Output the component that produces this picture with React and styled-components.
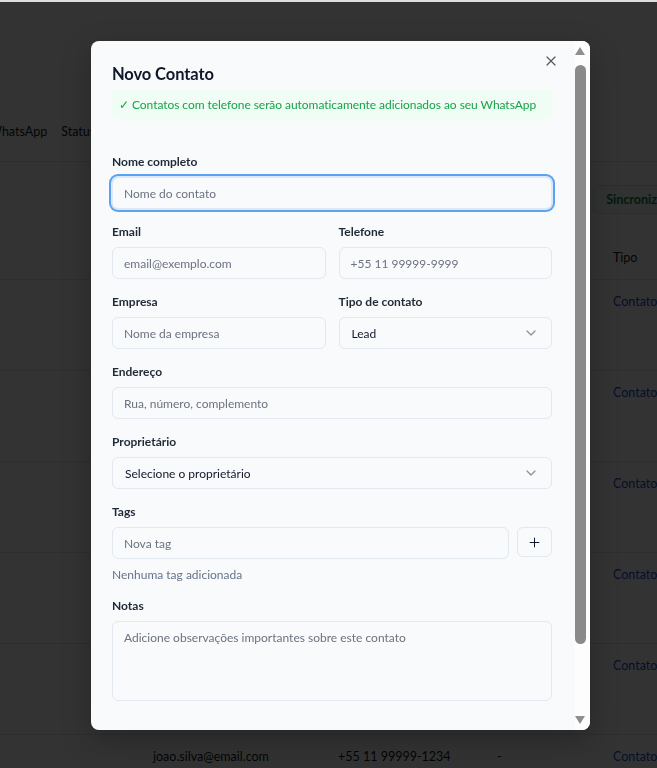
import React from 'react';
import styled, { createGlobalStyle } from 'styled-components';
import { X, ChevronDown, Plus } from 'lucide-react';

const GlobalStyle = createGlobalStyle`
  html, body {
    margin: 0;
    padding: 0;
  }
  body {
    font-family: Lato, "Liberation Sans", sans-serif;
    background: #dedede;
    overflow: hidden;
  }
  * {
    box-sizing: border-box;
  }
`;

/* ---------- page behind the dialog ---------- */

const Page = styled.div`
  height: 768px;
  margin-top: 2px;
  background: #ffffff;
  overflow: hidden;
  color: #111827;
  font-size: 12.5px;
`;

const Tabs = styled.div`
  display: flex;
  align-items: center;
  gap: 14px;
  height: 60px;
  margin-top: 100px;
  margin-left: -11px;
  border-bottom: 1px solid #e5e7eb;
`;

const Toolbar = styled.div`
  display: flex;
  justify-content: flex-end;
  padding: 23px 0 0;
  margin-right: -24px;
`;

const SyncButton = styled.div`
  height: 29px;
  padding: 0 12px;
  display: flex;
  align-items: center;
  border: 1px solid #bbf7d0;
  background: #f0fdf4;
  border-radius: 6px;
  color: #15803d;
  font-weight: 700;
`;

const TableHead = styled.div`
  display: grid;
  grid-template-columns: 153px 185px 159px 116px 1fr;
  align-items: center;
  height: 44px;
  margin-top: 22px;
  border-bottom: 1px solid #e5e7eb;
`;

const Row = styled.div`
  display: grid;
  grid-template-columns: 153px 185px 159px 116px 1fr;
  height: 91px;
  padding-top: 13px;
  line-height: 18px;
  border-bottom: 1px solid #e5e7eb;
`;

const TypeLink = styled.span`
  color: #1d4ed8;
`;

/* ---------- dialog ---------- */

const Overlay = styled.div`
  position: fixed;
  inset: 2px 0 0 0;
  background: rgba(0, 0, 0, 0.8);
`;

const Dialog = styled.div`
  position: fixed;
  left: 91px;
  top: 41px;
  width: 499px;
  height: 689px;
  display: flex;
  background: #f9fafb;
  border-radius: 8px;
  overflow: hidden;
  box-shadow: 0 10px 30px rgba(0, 0, 0, 0.25);
`;

const ScrollArea = styled.div`
  flex: 1;
  min-width: 0;
  overflow: hidden;
`;

const ScrollBar = styled.div`
  flex: none;
  width: 15px;
  display: flex;
  flex-direction: column;
  padding: 6px 0 6px;
  background: #fdfdfd;
`;

const Arrow = styled.div`
  width: 0;
  height: 0;
  border-left: 5.5px solid transparent;
  border-right: 5.5px solid transparent;
  ${(p) =>
    p.$down
      ? 'border-top: 8px solid #8f8f8f; margin-top: auto;'
      : 'border-bottom: 8px solid #8f8f8f;'}
`;

const Thumb = styled.div`
  width: 11px;
  height: 579px;
  margin-top: 10px;
  border-radius: 6px;
  background: #8a8a8a;
`;

const Body = styled.div`
  position: relative;
  padding: 20px 23px 24px 21px;
  font-size: 12px;
`;

const CloseButton = styled.button`
  position: absolute;
  top: 12px;
  right: 16px;
  width: 16px;
  height: 16px;
  padding: 0;
  border: none;
  background: none;
  color: #333;
  opacity: 0.8;
  display: flex;
  cursor: pointer;
`;

const Title = styled.h2`
  margin: 0;
  font-size: 16.5px;
  line-height: 26px;
  font-weight: 700;
  letter-spacing: -0.1px;
  color: #0f172a;
`;

const Notice = styled.div`
  margin-top: 3px;
  padding: 6px 7px;
  line-height: 17px;
  font-size: 12px;
  letter-spacing: -0.05px;
  color: #16a34a;
  background: #f0fdf4;
  border-radius: 4px;
`;

const Form = styled.div`
  display: flex;
  flex-direction: column;
  gap: 16px;
  margin-top: 36px;
`;

const Pair = styled.div`
  display: grid;
  grid-template-columns: 1fr 1fr;
  gap: 13px;
`;

const Field = styled.div`
  display: flex;
  flex-direction: column;
  gap: 8px;
`;

const Label = styled.label`
  font-size: 12px;
  line-height: 14px;
  font-weight: 700;
  color: #1f2937;
`;

const Input = styled.input`
  width: 100%;
  height: 32px;
  padding: 0 11px;
  border: 1px solid #e2e8f0;
  border-radius: 6px;
  background: transparent;
  font: inherit;
  font-size: 12px;
  color: #0f172a;
  outline: none;
  box-shadow: ${(p) => (p.$focused ? '0 0 0 1px #dbeafe, 0 0 0 3px #5aa2f2' : 'none')};

  &::placeholder {
    color: #6b7280;
  }
`;

const Select = styled.div`
  height: 32px;
  padding: 0 12px;
  display: flex;
  align-items: center;
  justify-content: space-between;
  border: 1px solid #e2e8f0;
  border-radius: 6px;
  font-size: 12px;
  color: #0f172a;

  svg {
    opacity: 0.45;
  }
`;

const TagRow = styled.div`
  display: flex;
  align-items: flex-start;
  gap: 8px;
`;

const IconButton = styled.button`
  flex: none;
  width: 35px;
  height: 30px;
  display: flex;
  align-items: center;
  justify-content: center;
  border: 1px solid #e2e8f0;
  border-radius: 6px;
  background: transparent;
  color: #0f172a;
  padding: 0;
`;

const Hint = styled.div`
  font-size: 12px;
  line-height: 16px;
  color: #64748b;
`;

const TextArea = styled.textarea`
  width: 100%;
  height: 80px;
  padding: 8px 11px;
  border: 1px solid #e2e8f0;
  border-radius: 6px;
  background: transparent;
  font: inherit;
  font-size: 12px;
  line-height: 16px;
  resize: none;
  outline: none;

  &::placeholder {
    color: #6b7280;
  }
`;

const Footer = styled.div`
  display: flex;
  justify-content: flex-end;
  gap: 8px;
  margin-top: 40px;
`;

const FooterButton = styled.button`
  height: 40px;
  padding: 0 16px;
  border-radius: 6px;
  font: inherit;
  font-size: 13px;
  font-weight: 700;
  border: 1px solid ${(p) => (p.$primary ? '#0f172a' : '#e2e8f0')};
  background: ${(p) => (p.$primary ? '#0f172a' : 'transparent')};
  color: ${(p) => (p.$primary ? '#fff' : '#0f172a')};
`;

const rows = [
  { email: 'maria.souza@email.com', phone: '+55 11 98888-1111', company: 'Tech Ltda' },
  { email: 'pedro.lima@email.com', phone: '+55 21 97777-2222', company: '-' },
  { email: 'ana.costa@email.com', phone: '+55 31 96666-3333', company: 'Costa & Cia' },
  { email: 'carlos.melo@email.com', phone: '+55 41 95555-4444', company: '-' },
  { email: 'julia.reis@email.com', phone: '+55 51 94444-5555', company: 'Reis ME' },
  { email: 'joao.silva@email.com', phone: '+55 11 99999-1234', company: '-' },
];

export default function App() {
  return (
    <>
      <GlobalStyle />
      <Page>
        <Tabs>
          <span>WhatsApp</span>
          <span>Status</span>
        </Tabs>
        <Toolbar>
          <SyncButton>Sincronizar</SyncButton>
        </Toolbar>
        <TableHead>
          <span />
          <span>Email</span>
          <span>Telefone</span>
          <span>Empresa</span>
          <span>Tipo</span>
        </TableHead>
        {rows.map((r) => (
          <Row key={r.email}>
            <span />
            <span>{r.email}</span>
            <span>{r.phone}</span>
            <span>{r.company}</span>
            <TypeLink>Contato</TypeLink>
          </Row>
        ))}
      </Page>

      <Overlay />
      <Dialog>
        <ScrollArea>
          <Body>
            <CloseButton aria-label="Fechar">
              <X size={16} strokeWidth={1.8} />
            </CloseButton>
            <Title>Novo Contato</Title>
            <Notice>✓ Contatos com telefone serão automaticamente adicionados ao seu WhatsApp</Notice>

            <Form>
              <Field>
                <Label>Nome completo</Label>
                <Input $focused placeholder="Nome do contato" />
              </Field>

              <Pair>
                <Field>
                  <Label>Email</Label>
                  <Input placeholder="email@exemplo.com" />
                </Field>
                <Field>
                  <Label>Telefone</Label>
                  <Input placeholder="+55 11 99999-9999" />
                </Field>
              </Pair>

              <Pair>
                <Field>
                  <Label>Empresa</Label>
                  <Input placeholder="Nome da empresa" />
                </Field>
                <Field>
                  <Label>Tipo de contato</Label>
                  <Select>
                    <span>Lead</span>
                    <ChevronDown size={16} />
                  </Select>
                </Field>
              </Pair>

              <Field>
                <Label>Endereço</Label>
                <Input placeholder="Rua, número, complemento" />
              </Field>

              <Field>
                <Label>Proprietário</Label>
                <Select>
                  <span>Selecione o proprietário</span>
                  <ChevronDown size={16} />
                </Select>
              </Field>

              <Field>
                <Label>Tags</Label>
                <TagRow>
                  <Input placeholder="Nova tag" />
                  <IconButton aria-label="Adicionar tag">
                    <Plus size={15} strokeWidth={1.6} />
                  </IconButton>
                </TagRow>
                <Hint>Nenhuma tag adicionada</Hint>
              </Field>

              <Field>
                <Label>Notas</Label>
                <TextArea placeholder="Adicione observações importantes sobre este contato" />
              </Field>
            </Form>

            <Footer>
              <FooterButton>Cancelar</FooterButton>
              <FooterButton $primary>Criar Contato</FooterButton>
            </Footer>
          </Body>
        </ScrollArea>
        <ScrollBar aria-hidden="true">
          <Arrow />
          <Thumb />
          <Arrow $down />
        </ScrollBar>
      </Dialog>
    </>
  );
}
